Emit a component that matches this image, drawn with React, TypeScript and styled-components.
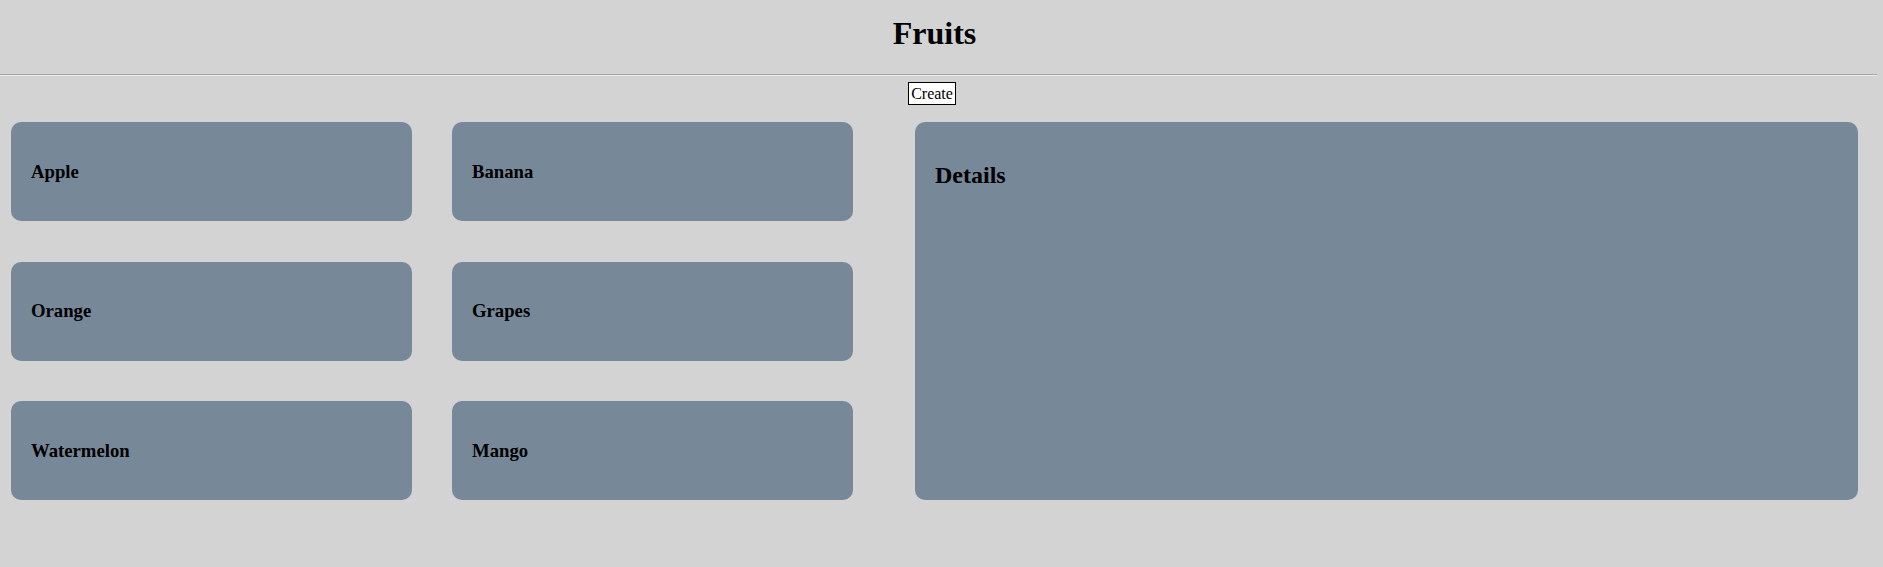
import React from "react";
import styled, { createGlobalStyle } from "styled-components";

const GlobalStyle = createGlobalStyle`
  html, body {
    margin: 0;
    padding: 0;
    background: #d3d3d3;
    font-family: "Liberation Serif", "Times New Roman", serif;
    color: #000;
  }
`;

const Page = styled.div`
  width: 1877px;
  min-height: 567px;
  background: #d3d3d3;
`;

const Header = styled.header`
  padding-right: 8px;
  text-align: center;
`;

const Title = styled.h1`
  margin: 15px 0 23px;
  font-size: 32px;
  line-height: 36px;
  font-weight: bold;
`;

const Divider = styled.hr`
  margin: 0;
  height: 0;
  border: none;
  border-top: 1px solid #a6a6a6;
  border-bottom: 1px solid #ececec;
`;

const Toolbar = styled.div`
  display: flex;
  justify-content: center;
  padding: 6px 13px 0 0;
`;

const CreateButton = styled.button`
  height: 23px;
  padding: 0 2px;
  background: #fff;
  border: 1px solid #000;
  border-radius: 0;
  font-family: "Liberation Serif", "Times New Roman", serif;
  font-size: 16px;
  color: #000;
  cursor: pointer;
`;

const Main = styled.main`
  display: grid;
  grid-template-columns: 842px 943px;
  column-gap: 62px;
  padding: 17px 11px 0;
  align-items: stretch;
`;

const List = styled.div`
  display: grid;
  grid-template-columns: 401px 401px;
  column-gap: 40px;
  row-gap: 40.5px;
  align-content: start;
`;

const Card = styled.div`
  box-sizing: border-box;
  height: 99px;
  padding: 0 20px;
  display: flex;
  align-items: center;
  background: #778899;
  border-radius: 10px;
`;

const CardName = styled.h3`
  margin: 0;
  font-size: 18.72px;
  font-weight: bold;
`;

const Details = styled.section`
  box-sizing: border-box;
  padding: 20px;
  background: #778899;
  border-radius: 10px;
`;

const DetailsTitle = styled.h2`
  margin: 19.92px 0;
  font-size: 24px;
  font-weight: bold;
`;

const fruits = ["Apple", "Banana", "Orange", "Grapes", "Watermelon", "Mango"];

export default function App() {
  return (
    <>
      <GlobalStyle />
      <Page>
        <Header>
          <Title>Fruits</Title>
        </Header>
        <Divider />
        <Toolbar>
          <CreateButton>Create</CreateButton>
        </Toolbar>
        <Main>
          <List>
            {fruits.map((f) => (
              <Card key={f}>
                <CardName>{f}</CardName>
              </Card>
            ))}
          </List>
          <Details>
            <DetailsTitle>Details</DetailsTitle>
          </Details>
        </Main>
      </Page>
    </>
  );
}
